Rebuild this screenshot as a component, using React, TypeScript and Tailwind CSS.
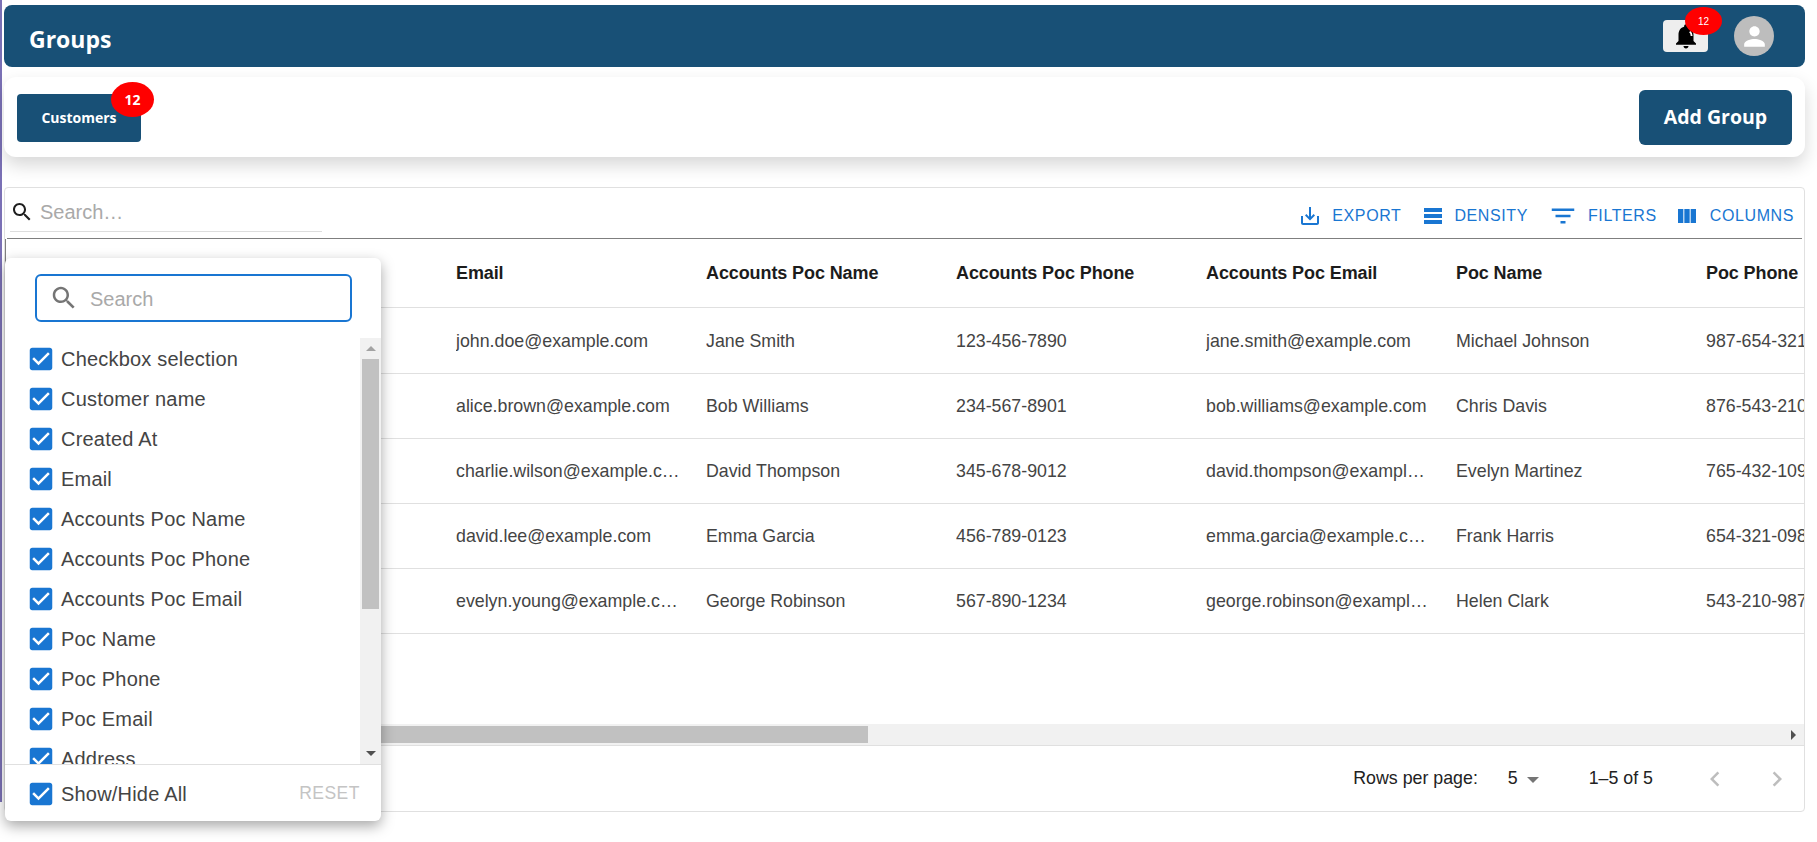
import { ReactNode } from "react";

const columns = ["Email", "Accounts Poc Name", "Accounts Poc Phone", "Accounts Poc Email", "Poc Name", "Poc Phone"];

const rows = [
    ["john.doe@example.com", "Jane Smith", "123-456-7890", "jane.smith@example.com", "Michael Johnson", "987-654-3210"],
    ["alice.brown@example.com", "Bob Williams", "234-567-8901", "bob.williams@example.com", "Chris Davis", "876-543-2109"],
    ["charlie.wilson@example.com", "David Thompson", "345-678-9012", "david.thompson@example.com", "Evelyn Martinez", "765-432-1098"],
    ["david.lee@example.com", "Emma Garcia", "456-789-0123", "emma.garcia@example.com", "Frank Harris", "654-321-0987"],
    ["evelyn.young@example.com", "George Robinson", "567-890-1234", "george.robinson@example.com", "Helen Clark", "543-210-9876"],
];

const columnOptions = [
    "Checkbox selection",
    "Customer name",
    "Created At",
    "Email",
    "Accounts Poc Name",
    "Accounts Poc Phone",
    "Accounts Poc Email",
    "Poc Name",
    "Poc Phone",
    "Poc Email",
    "Address",
];

const searchPath = "M15.5 14h-.79l-.28-.27C15.41 12.59 16 11.11 16 9.5 16 5.91 13.09 3 9.5 3S3 5.91 3 9.5 5.91 16 9.5 16c1.61 0 3.09-.59 4.23-1.57l.27.28v.79l5 4.99L20.49 19l-4.99-5zm-6 0C7.01 14 5 11.99 5 9.5S7.01 5 9.5 5 14 7.01 14 9.5 11.99 14 9.5 14z";

function MuiIcon({ d, className }: { d: string; className?: string }) {
    return (
        <svg viewBox="0 0 24 24" fill="currentColor" className={className}>
            <path d={d} />
        </svg>
    );
}

function ToolbarButton({ icon, label, className }: { icon: ReactNode; label: string; className: string }) {
    return (
        <div className={`flex items-center text-[#1976d2] text-[16px] tracking-[0.6px] ${className}`}>
            {icon}
            <span>{label}</span>
        </div>
    );
}

function CheckedBox() {
    return (
        <MuiIcon
            d="M19 3H5c-1.11 0-2 .9-2 2v14c0 1.1.89 2 2 2h14c1.11 0 2-.9 2-2V5c0-1.1-.89-2-2-2zm-9 14l-5-5 1.41-1.41L10 14.17l7.59-7.59L19 8l-9 9z"
            className="w-[30px] h-[30px] text-[#1976d2] shrink-0"
        />
    );
}

function ColumnsPanel() {
    return (
        <div className="absolute left-[5px] top-[258px] w-[376px] h-[563px] bg-white rounded-md shadow-[0_5px_14px_rgba(0,0,0,0.35)] flex flex-col z-10">
            <div className="h-[80px] pt-[16px] pl-[30px] shrink-0">
                <div className="w-[317px] h-[48px] rounded-md border-2 border-[#1976d2] flex items-center pl-[12px]">
                    <MuiIcon d={searchPath} className="w-[30px] h-[30px] text-[#757575]" />
                    <span className="ml-[11px] mt-[1px] text-[20px] text-[#a9a9a9]">Search</span>
                </div>
            </div>

            <div className="h-[426px] flex shrink-0">
                <div className="flex-1 overflow-hidden pl-[21px] pt-[1px]">
                    {columnOptions.map((name) => (
                        <div key={name} className="h-[40px] flex items-center shrink-0">
                            <CheckedBox />
                            <span className="ml-[5px] text-[20px] tracking-[0.2px] text-[#444444] whitespace-nowrap">{name}</span>
                        </div>
                    ))}
                </div>
                <div className="w-[21px] bg-[#f1f1f1] flex flex-col items-center shrink-0">
                    <div className="h-[21px] flex items-center justify-center">
                        <div className="w-0 h-0 border-x-[5px] border-x-transparent border-b-[5px] border-b-[#a3a3a3]" />
                    </div>
                    <div className="w-[17px] h-[250px] bg-[#c1c1c1]" />
                    <div className="flex-1" />
                    <div className="h-[21px] flex items-center justify-center">
                        <div className="w-0 h-0 border-x-[5px] border-x-transparent border-t-[5px] border-t-[#505050]" />
                    </div>
                </div>
            </div>

            <div className="flex-1 border-t border-[#e0e0e0] flex items-center justify-between pl-[21px] pr-[21px] pt-[1px]">
                <div className="flex items-center">
                    <CheckedBox />
                    <span className="ml-[5px] text-[20px] tracking-[0.2px] text-[#444444]">Show/Hide All</span>
                </div>
                <span className="text-[17.5px] tracking-[0.5px] text-[#c4c4c4]">RESET</span>
            </div>
        </div>
    );
}

export default function App() {
    return (
        <div className="relative flex h-[842px] w-[1817px] overflow-hidden bg-white font-['Liberation_Sans',Arial,sans-serif]">
            <div className="w-[2px] h-[802px] bg-[#7a70b5] shrink-0" />

            <main className="flex-1 min-w-0 pl-[2px] pr-[12px] pt-[5px]">
                {/* Top bar */}
                <header className="h-[62px] bg-[#185076] rounded-lg flex items-center justify-between pl-[25px] pr-[31px]">
                    <h1 className="font-['Open_Sans',sans-serif] font-bold text-[23px] text-white mt-[7px]">Groups</h1>
                    <div className="flex items-center">
                        <div className="relative w-[45px] h-[32px] bg-[#eeeeee] rounded flex items-center justify-center">
                            <svg viewBox="0 0 24 24" className="w-[30px] h-[30px]">
                                <path fill="#000" d="M12 22c1.1 0 2-.9 2-2h-4c0 1.1.89 2 2 2zm6-6v-5c0-3.07-1.64-5.64-4.5-6.32V4c0-.83-.67-1.5-1.5-1.5s-1.5.67-1.5 1.5v.68C7.63 5.36 6 7.92 6 11v5l-2 2v1h16v-1l-2-2z" />
                                <path fill="none" stroke="#fff" strokeWidth="1.5" d="M15 8.5c1 .8 1.5 2 1.5 3.5" />
                            </svg>
                            <span className="absolute left-[22px] -top-[13px] w-[37px] h-[28px] rounded-[50%] bg-[#ff0000] text-white text-[10px] flex items-center justify-center">12</span>
                        </div>
                        <div className="ml-[26px] w-[40px] h-[40px] rounded-full bg-[#bdbdbd] flex items-center justify-center">
                            <MuiIcon d="M12 12c2.21 0 4-1.79 4-4s-1.79-4-4-4-4 1.79-4 4 1.79 4 4 4zm0 2c-2.67 0-8 1.34-8 4v2h16v-2c0-2.66-5.33-4-8-4z" className="w-[31px] h-[31px] text-white" />
                        </div>
                    </div>
                </header>

                {/* Group tabs */}
                <section className="mt-[10px] h-[80px] bg-white rounded-xl shadow-[0_8px_18px_rgba(0,0,0,0.16)] flex items-center justify-between pl-[13px] pr-[13px]">
                    <button className="relative mt-[1px] w-[124px] h-[48px] bg-[#185076] rounded text-white font-['Open_Sans',sans-serif] font-bold text-[14px]">
                        Customers
                        <span className="absolute left-[94px] -top-[12px] w-[43px] h-[35px] rounded-[50%] bg-[#ff0000] text-white text-[14px] flex items-center justify-center">12</span>
                    </button>
                    <button className="w-[153px] h-[55px] bg-[#185076] rounded-md text-white font-['Open_Sans',sans-serif] font-bold text-[19.5px]">
                        Add Group
                    </button>
                </section>

                {/* Data grid */}
                <section className="mt-[30px] h-[625px] border border-[#e0e0e0] rounded-[4px] flex flex-col overflow-hidden">
                    <div className="h-[51px] mx-[2px] shrink-0 border-b border-[#7f7f7f] flex justify-between">
                        <div className="w-[312px] ml-[3px] h-[44px] border-b border-[#dddddd] flex items-center pt-[5px]">
                            <MuiIcon d={searchPath} className="w-[24px] h-[24px] text-[#1f1f1f]" />
                            <span className="ml-[6px] text-[20px] text-[#a9a9a9]">Search…</span>
                        </div>
                        <div className="flex items-center pr-[8px] pt-[6px]">
                            <ToolbarButton
                                label="EXPORT"
                                className="gap-[10px]"
                                icon={<MuiIcon d="M19 12v7H5v-7H3v7c0 1.1.9 2 2 2h14c1.1 0 2-.9 2-2v-7h-2zm-6 .67l2.59-2.58L17 11.5l-5 5-5-5 1.41-1.41L11 12.67V3h2z" className="w-[24px] h-[24px]" />}
                            />
                            <ToolbarButton
                                label="DENSITY"
                                className="gap-[9px] ml-[20px]"
                                icon={<MuiIcon d="M21 8H3V4h18v4zm0 2H3v4h18v-4zm0 6H3v4h18v-4z" className="w-[24px] h-[24px]" />}
                            />
                            <ToolbarButton
                                label="FILTERS"
                                className="gap-[10px] ml-[20px]"
                                icon={<MuiIcon d="M10 18h4v-2h-4v2zM3 6v2h18V6H3zm3 7h12v-2H6v2z" className="w-[30px] h-[30px]" />}
                            />
                            <ToolbarButton
                                label="COLUMNS"
                                className="gap-[11px] ml-[18px]"
                                icon={<MuiIcon d="M14.67 5v14H9.33V5h5.34zm1 14H21V5h-5.33v14zm-7.34 0V5H3v14h5.33z" className="w-[24px] h-[24px]" />}
                            />
                        </div>
                    </div>

                    <div className="flex h-[69px] shrink-0 border-b border-[#e0e0e0] text-[#1c1c1c] font-bold text-[18px] tracking-[-0.1px]">
                        <div className="w-[441px] shrink-0 border-l border-[#7f7f7f]" />
                        {columns.map((title) => (
                            <div key={title} className="w-[250px] shrink-0 pl-[10px] flex items-center whitespace-nowrap">
                                {title}
                            </div>
                        ))}
                    </div>

                    <div className="mt-[1px]">
                        {rows.map((row) => (
                            <div key={row[0]} className="flex h-[65px] border-b border-[#e0e0e0] text-[#444444] text-[17.8px]">
                                <div className="w-[441px] shrink-0" />
                                {row.map((cell) => (
                                    <div key={cell} className="w-[250px] shrink-0 pl-[10px] pr-[14px] flex items-center">
                                        <span className="truncate">{cell}</span>
                                    </div>
                                ))}
                            </div>
                        ))}
                    </div>

                    <div className="flex-1" />

                    <div className="h-[22px] shrink-0 bg-[#f1f1f1] flex items-center justify-between border-b border-[#e0e0e0]">
                        <div className="w-[863px] h-[17px] bg-[#c1c1c1]" />
                        <div className="mr-[8px] w-0 h-0 border-y-[5px] border-y-transparent border-l-[5px] border-l-[#505050]" />
                    </div>

                    <div className="h-[65px] shrink-0 flex items-center justify-end text-[#222222] text-[17.8px] pr-[12px]">
                        <span>Rows per page:</span>
                        <span className="ml-[30px]">5</span>
                        <div className="ml-[9px] mt-[2px] w-0 h-0 border-x-[6px] border-x-transparent border-t-[6px] border-t-[#757575]" />
                        <span className="ml-[50px]">1–5 of 5</span>
                        <MuiIcon d="M15.41 7.41L14 6l-6 6 6 6 1.41-1.41L10.83 12z" className="ml-[47px] w-[30px] h-[30px] text-[#bdbdbd]" />
                        <MuiIcon d="M10 6L8.59 7.41 13.17 12l-4.58 4.59L10 18l6-6z" className="ml-[32px] w-[30px] h-[30px] text-[#bdbdbd]" />
                    </div>
                </section>
            </main>

            <ColumnsPanel />
        </div>
    );
}
